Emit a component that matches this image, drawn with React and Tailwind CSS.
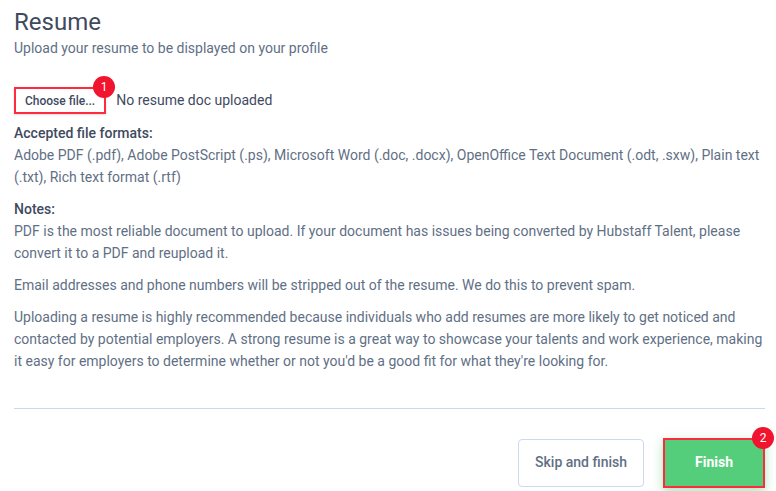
import { useRef, useState } from 'react'

const NOTES = [
  'PDF is the most reliable document to upload. If your document has issues being converted by Hubstaff Talent, please convert it to a PDF and reupload it.',
  'Email addresses and phone numbers will be stripped out of the resume. We do this to prevent spam.',
  "Uploading a resume is highly recommended because individuals who add resumes are more likely to get noticed and contacted by potential employers. A strong resume is a great way to showcase your talents and work experience, making it easy for employers to determine whether or not you'd be a good fit for what they're looking for.",
]

function StepBadge({ children }) {
  return (
    <span className="absolute -top-[13px] -right-[11px] grid size-[22px] place-items-center rounded-full bg-[#f0142f] text-xs font-normal text-white">
      {children}
    </span>
  )
}

export default function App() {
  const fileInput = useRef(null)
  const [file, setFile] = useState(null)

  return (
    <main className="bg-white pt-[7px] pr-[11px] pb-6 pl-3.5 font-['Roboto',sans-serif] text-sm leading-[22px] text-[#5f7085]">
      <h1 className="text-2xl leading-[30px] text-[#3f4a5f]">Resume</h1>
      <p>Upload your resume to be displayed on your profile</p>

      <div className="mt-7 flex items-start gap-2.5 text-[#3f4a5f]">
        <button
          type="button"
          className="relative h-[27px] border-2 border-[#ff2b3d] bg-white px-[9px] text-xs font-medium shadow-sm"
          onClick={() => fileInput.current.click()}
        >
          Choose file...
          <StepBadge>1</StepBadge>
        </button>
        <input
          ref={fileInput}
          type="file"
          aria-label="Resume"
          className="hidden"
          onChange={(e) => setFile(e.target.files?.[0] || null)}
        />
        <span className="leading-[26px]">{file ? file.name : 'No resume doc uploaded'}</span>
      </div>

      <section className="mt-2">
        <h2 className="font-medium text-[#3f4a5f]">Accepted file formats:</h2>
        <p>
          Adobe PDF (.pdf), Adobe PostScript (.ps), Microsoft Word (.doc, .docx), OpenOffice Text Document (.odt, .sxw),
          Plain text (.txt), Rich text format (.rtf)
        </p>
      </section>

      <section className="mt-2.5">
        <h2 className="font-medium text-[#3f4a5f]">Notes:</h2>
        <div className="space-y-2.5">
          {NOTES.map((note) => (
            <p key={note}>{note}</p>
          ))}
        </div>
      </section>

      <hr className="mt-9 border-[#cad7ec]" />

      <div className="mt-[29px] flex items-center justify-end gap-[19px]">
        <button type="button" className="h-12 rounded border border-[#ccd9ee] bg-white px-4 pb-0.5 font-medium">
          Skip and finish
        </button>
        <button
          type="button"
          className="relative h-[50px] border-2 border-[#ff2b3d] bg-[#55ce7b] px-[30px] pb-0.5 font-bold text-white shadow-[0_4px_10px_rgba(85,206,123,0.5)]"
        >
          Finish
          <StepBadge>2</StepBadge>
        </button>
      </div>
    </main>
  )
}
